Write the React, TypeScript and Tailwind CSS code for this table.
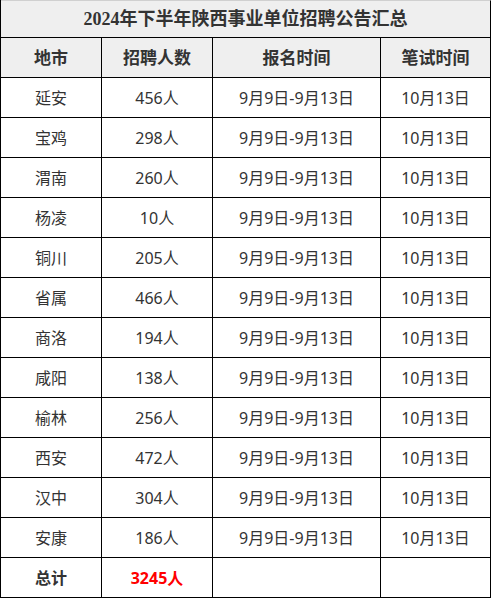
import React from "react";

const rows: [string, string][] = [
  ["延安", "456人"],
  ["宝鸡", "298人"],
  ["渭南", "260人"],
  ["杨凌", "10人"],
  ["铜川", "205人"],
  ["省属", "466人"],
  ["商洛", "194人"],
  ["咸阳", "138人"],
  ["榆林", "256人"],
  ["西安", "472人"],
  ["汉中", "304人"],
  ["安康", "186人"],
];

const cols = "grid grid-cols-[101px_111px_168px_110px]";
const cell = "flex items-center justify-center border-r border-b border-black h-[40px]";

export default function App() {
  return (
    <div className="w-[492px] h-[598px] bg-white overflow-hidden">
      <div
        className="w-[491px] border-l border-black text-[#333]"
        style={{ fontFamily: '"Noto Sans", "Noto Sans CJK SC", sans-serif' }}
      >
        <div
          className="h-[38px] flex items-center justify-center bg-[#efefef] border-t border-r border-b border-t-[#d0d0d0] border-r-black border-b-black text-[18px] font-bold"
          style={{ fontFamily: '"Liberation Serif", "Noto Sans CJK SC", serif' }}
        >
          2024年下半年陕西事业单位招聘公告汇总
        </div>
        <div className={`${cols} bg-[#efefef] text-[17px] font-bold`}>
          <div className={cell}>地市</div>
          <div className={cell}>招聘人数</div>
          <div className={cell}>报名时间</div>
          <div className={cell}>笔试时间</div>
        </div>
        {rows.map(([city, num]) => (
          <div key={city} className={`${cols} text-[16px]`}>
            <div className={cell}>{city}</div>
            <div className={cell}>{num}</div>
            <div className={cell}>9月9日-9月13日</div>
            <div className={cell}>10月13日</div>
          </div>
        ))}
        <div className={`${cols} text-[16px]`}>
          <div className={`${cell} font-bold`}>总计</div>
          <div className={`${cell} font-bold text-[#ff0000]`}>3245人</div>
          <div className={cell}></div>
          <div className={cell}></div>
        </div>
      </div>
    </div>
  );
}
